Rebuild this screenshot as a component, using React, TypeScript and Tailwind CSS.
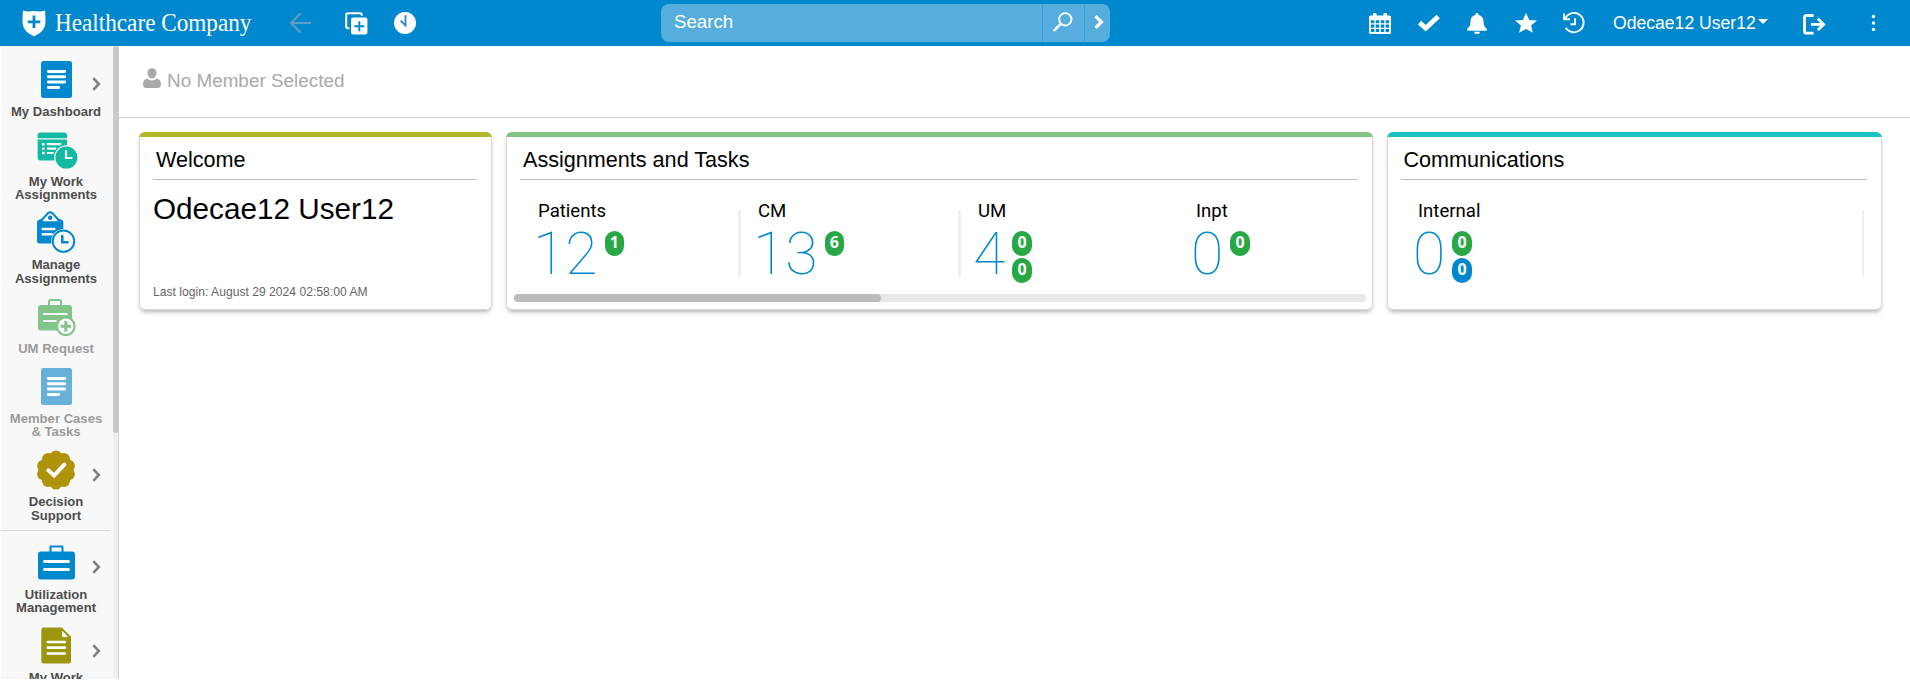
import type { ReactNode } from "react";

function ShieldLogo() {
  return (
    <svg width="24" height="27" viewBox="0 0 24 27">
      <path d="M1 .6C4.500 2 8.500 1.500 12 1c3.500.5 7.500 1 11-.4.3 4 .7 8.400.4 12.400-.6 7-5.400 10.600-11.400 13.200C6 23.600 1.200 20 .6 13 .3 9 .7 4.600 1 .6z" fill="#fff" />
      <path d="M12 5.500v12.600M5.700 11.800h12.600" stroke="#0088ce" strokeWidth="2.800" />
    </svg>
  );
}

function BackArrow() {
  return (
    <svg width="23" height="22" viewBox="0 0 23 22" fill="none" stroke="#5f9fc4" strokeWidth="2.200">
      <path d="M22 11H2M11.500 1.500 2 11l9.500 9.500" />
    </svg>
  );
}

function AddWindow() {
  return (
    <svg width="23" height="23" viewBox="0 0 23 23">
      <path d="M4.500 16.300H2.800a1.600 1.600 0 0 1-1.600-1.600V3a1.800 1.800 0 0 1 1.800-1.800h12.200a1.600 1.600 0 0 1 1.600 1.600v1" fill="none" stroke="#fff" strokeWidth="2" />
      <rect x="6" y="5.600" width="16.400" height="16.800" rx="2" fill="#fff" />
      <path d="M14.300 9.200v10M9.300 14.200h10" stroke="#0088ce" strokeWidth="1.900" />
    </svg>
  );
}

function ClockSolid() {
  return (
    <svg width="22" height="22" viewBox="0 0 22 22">
      <circle cx="11" cy="11" r="11" fill="#fff" />
      <path d="M11.500 3.300v10L6.600 8.600" fill="none" stroke="#2b83c4" strokeWidth="1.800" />
    </svg>
  );
}

function Magnifier() {
  return (
    <svg width="20" height="20" viewBox="0 0 20 20" fill="none" stroke="#fff">
      <circle cx="12.300" cy="7.300" r="6.200" strokeWidth="1.900" />
      <path d="m7.800 11.800-6.300 6.400" strokeWidth="2.600" strokeLinecap="round" />
    </svg>
  );
}

function CalendarIcon() {
  return (
    <svg width="22" height="21" viewBox="0 0 20 21" preserveAspectRatio="none">
      <rect y="2.500" width="20" height="18.500" rx="1.600" fill="#fff" />
      <rect x="3.600" width="3.200" height="5" rx="1.200" fill="#fff" />
      <rect x="13.200" width="3.200" height="5" rx="1.200" fill="#fff" />
      <path d="M1.700 7.300h3.200v3H1.700zM6.100 7.300h3.200v3H6.100zM10.700 7.300h3.200v3h-3.200zM15.100 7.300h3.200v3h-3.200zM1.700 11.500h3.200v3.200H1.700zM6.100 11.500h3.200v3.200H6.100zM10.700 11.500h3.200v3.200h-3.200zM15.100 11.500h3.200v3.200h-3.200zM1.700 15.900h3.200v3.200H1.700zM6.100 15.900h3.200v3.200H6.100zM10.700 15.900h3.200v3.200h-3.200zM15.100 15.900h3.200v3.200h-3.200z" fill="#0088ce" />
    </svg>
  );
}

function CheckIcon() {
  return (
    <svg width="22" height="18" viewBox="0 0 22 18" fill="none" stroke="#fff" strokeWidth="4.800">
      <path d="m1.500 8.600 6.200 5.700L20.200 2.400" />
    </svg>
  );
}

function BellIcon() {
  return (
    <svg width="20" height="21" viewBox="0 0 19 21" preserveAspectRatio="none" fill="#fff">
      <path d="M9.500 0c.9 0 1.500.6 1.500 1.500v.4c3 .7 4.700 3 4.700 6 0 4.300 1 5.800 2.600 7.300.4.400.7.900.7 1.400 0 .8-.5 1.200-1.200 1.200H1.200C.5 17.800 0 17.400 0 16.600c0-.5.300-1 .7-1.400 1.600-1.500 2.600-3 2.600-7.300 0-3 1.700-5.300 4.700-6v-.4C8 .6 8.600 0 9.500 0zM6.800 18.700h5.400a2.700 2.300 0 0 1-5.400 0z" />
    </svg>
  );
}

function StarIcon() {
  return (
    <svg width="22" height="20" viewBox="0 0 20 20" preserveAspectRatio="none" fill="#fff">
      <path d="m10 0 2.900 6.900 7.100.6-5.400 4.900 1.700 7.400-6.300-3.900-6.300 3.900 1.700-7.400L0 7.500l7.100-.6z" />
    </svg>
  );
}

function HistoryIcon() {
  return (
    <svg width="22" height="22" viewBox="0 0 22 22" fill="none" stroke="#fff" strokeWidth="1.900">
      <path d="M2 6.800A9.700 9.700 0 1 1 2.700 15.800" />
      <path d="M1 1.500V7.200H7" />
      <path d="M12 6.200v6H7.500" />
    </svg>
  );
}

function SignOutIcon() {
  return (
    <svg width="23" height="21" viewBox="0 0 23 21" fill="none" stroke="#fff">
      <path d="M10.600 1.500H3.200A1.700 1.700 0 0 0 1.500 3.200v14.300a1.700 1.700 0 0 0 1.700 1.700h7.400" strokeWidth="2.800" />
      <path d="M8 10.400h12.500" strokeWidth="2.800" />
      <path d="m14.800 4.800 5.800 5.600-5.800 5.600" strokeWidth="2.800" />
    </svg>
  );
}

function Chevron() {
  return (
    <svg width="9" height="14" viewBox="0 0 9 14" fill="none" stroke="#808080" strokeWidth="2.600">
      <path d="m1.300 1.200 5.500 5.800-5.500 5.800" />
    </svg>
  );
}

function PageIcon({ fill }: { fill: string }) {
  return (
    <svg width="31" height="37" viewBox="0 0 31 37">
      <rect width="31" height="37" rx="2.500" fill={fill} />
      <path d="M7.300 10.500h16.400M7.300 15.800h16.400M7.300 21h16.400M7.300 26.500h10.400" stroke="#fff" strokeWidth="2.900" strokeLinecap="round" />
    </svg>
  );
}

function WorkIcon() {
  return (
    <svg className="mt-[2px] ml-[3px] shrink-0" width="41" height="37" viewBox="0 0 41 37">
      <path d="M.6 6.200V3A2.500 2.500 0 0 1 3 .5h24.500A2.500 2.500 0 0 1 30 3v3.200z" fill="#13b9a3" />
      <path d="M.6 7.400H30v21H3a2.500 2.500 0 0 1-2.400-2.500z" fill="#13b9a3" />
      <path d="M5 12.200h2.600M5 16.600h2.600M5 21h2.600" stroke="#f8f8f8" strokeWidth="2.400" />
      <path d="M10.800 12.200h12.400M10.800 16.600h7.400M10.800 21h5" stroke="#f8f8f8" strokeWidth="2.200" strokeLinecap="round" />
      <circle cx="29.400" cy="25.600" r="12.300" fill="#f8f8f8" />
      <circle cx="29.400" cy="25.600" r="11" fill="#13b9a3" />
      <path d="M29 19v7h5.500" fill="none" stroke="#f8f8f8" strokeWidth="2.200" strokeLinecap="round" />
    </svg>
  );
}

function ManageIcon() {
  return (
    <svg width="39" height="43" viewBox="0 0 39 43">
      <path d="M2.500 8.500 10 6.500h7L24 8.500a2.500 2.500 0 0 1 2.300 2.500v21.500H3A2.800 2.800 0 0 1 0 29.700V11.500a3 3 0 0 1 2.500-3z" fill="#0088ce" />
      <path d="M5.200 10.200V8.500l6-6.500a2.800 2.800 0 0 1 4 0l6 6.500v1.700" fill="#f8f8f8" stroke="#0088ce" strokeWidth="2" strokeLinejoin="round" />
      <circle cx="13.200" cy="6.700" r="2.200" fill="#0088ce" />
      <path d="M5.800 18h11.500M5.800 23.200h9" stroke="#f8f8f8" strokeWidth="2.500" strokeLinecap="round" />
      <circle cx="26.500" cy="30.200" r="12.200" fill="#f8f8f8" />
      <circle cx="26.500" cy="30.200" r="10.700" fill="#f8f8f8" stroke="#0088ce" strokeWidth="1.900" />
      <path d="M25.300 25v6.200h5.300" fill="none" stroke="#0088ce" strokeWidth="2.500" strokeLinecap="round" />
    </svg>
  );
}

function RequestIcon() {
  return (
    <svg className="mt-[2px] ml-px" width="39" height="37" viewBox="0 0 39 37">
      <path d="M12 6.500V2.700A1.700 1.700 0 0 1 13.700 1h8.600A1.700 1.700 0 0 1 24 2.700v3.800" fill="none" stroke="#82c58b" strokeWidth="2" />
      <rect x="1" y="6" width="34" height="25.500" rx="2.600" fill="#82c58b" />
      <path d="M6.800 15h23M6.800 22h12" stroke="#f8f8f8" strokeWidth="2" strokeLinecap="round" />
      <circle cx="28.800" cy="27.200" r="9.300" fill="#f8f8f8" stroke="#82c58b" strokeWidth="1.200" />
      <circle cx="28.800" cy="27.200" r="8.600" fill="#f8f8f8" stroke="#82c58b" strokeWidth="1.700" />
      <path d="M28.800 22v10.400M23.600 27.200H34" stroke="#82c58b" strokeWidth="3" />
    </svg>
  );
}

const SEAL_LOBES = [0, 1, 2, 3, 4, 5, 6, 7, 8, 9].map((i) => {
  const angle = (i * 36 - 90) * (Math.PI / 180);
  return { cx: 20 + 13.8 * Math.cos(angle), cy: 20 + 13.8 * Math.sin(angle) };
});

function SealIcon() {
  return (
    <svg width="40" height="40" viewBox="0 0 40 40" fill="#ae930b">
      <circle cx="20" cy="20" r="17.600" />
      {SEAL_LOBES.map((lobe, i) => (
        <circle key={i} cx={lobe.cx} cy={lobe.cy} r="5.800" />
      ))}
      <path d="m12.300 20.300 5.800 5.200 10.200-10.800" fill="none" stroke="#fff" strokeWidth="4" strokeLinecap="round" />
    </svg>
  );
}

function BriefcaseIcon() {
  return (
    <svg width="37" height="35" viewBox="0 0 37 35">
      <path d="M12.500 7.500V1.500h12v6" fill="none" stroke="#0088ce" strokeWidth="2" strokeLinejoin="round" />
      <rect y="6.500" width="37" height="28" rx="3" fill="#0088ce" />
      <path d="M6.500 16.500h24M6.500 24.500h24" stroke="#fff" strokeWidth="3" strokeLinecap="round" />
    </svg>
  );
}

function NoteIcon() {
  return (
    <svg width="30" height="37" viewBox="0 0 30 37">
      <path d="M2.800.5h18L30 9.800V34a2.500 2.500 0 0 1-2.500 2.500H2.800A2.500 2.500 0 0 1 .3 34V3A2.500 2.500 0 0 1 2.800.5z" fill="#9a960f" />
      <path d="M21.600 4.400v5.300h4.600z" fill="#f8f8f8" stroke="#f8f8f8" />
      <path d="M6.800 15h17M6.800 20.700h17M6.800 26.500h17" stroke="#fff" strokeWidth="2.700" strokeLinecap="round" />
    </svg>
  );
}

type NavItemProps = { icon: ReactNode; lines: string[]; chevron?: boolean; muted?: boolean };

function NavItem({ icon, lines, chevron, muted }: NavItemProps) {
  return (
    <div className="shrink-0">
      <div className="grid h-[56.500px] grid-cols-[35px_42px_35px] items-center pt-[6px]">
        <span />
        <span className="flex justify-center">{icon}</span>
        {chevron && (
          <span className="pt-[10px] pl-[15px]">
            <Chevron />
          </span>
        )}
      </div>
      <div className={`text-center text-[13.100px] leading-[13.500px] font-bold whitespace-nowrap ${muted ? "text-[#9b9b9b]" : "text-[#4d4d4d]"}`}>
        {lines.map((line) => (
          <div key={line}>{line}</div>
        ))}
      </div>
    </div>
  );
}

function Sidebar() {
  return (
    <aside className="flex h-[633px] w-[119px] shrink-0 overflow-hidden border-r border-[#cfcfcf]">
      <nav className="ml-px flex w-[112px] shrink-0 flex-col overflow-hidden bg-[#f8f8f8] pt-[2px]">
        <div className="-ml-px w-[112px]">
          <NavItem icon={<PageIcon fill="#0088ce" />} lines={["My Dashboard"]} chevron />
          <NavItem icon={<WorkIcon />} lines={["My Work", "Assignments"]} />
          <NavItem icon={<ManageIcon />} lines={["Manage", "Assignments"]} />
          <NavItem icon={<RequestIcon />} lines={["UM Request"]} muted />
          <NavItem icon={<PageIcon fill="#66b0d9" />} lines={["Member Cases", "& Tasks"]} muted />
          <NavItem icon={<SealIcon />} lines={["Decision", "Support"]} chevron />
          <div className="mt-[8px] h-px w-[111px] bg-[#d9d9d9]" />
          <NavItem icon={<BriefcaseIcon />} lines={["Utilization", "Management"]} chevron />
          <NavItem icon={<NoteIcon />} lines={["My Work"]} chevron />
        </div>
      </nav>
      <div className="flex-1 bg-[#efefef]">
        <div className="h-[387px] rounded-[3px] bg-[#c9c9c9]" />
      </div>
    </aside>
  );
}

function Header() {
  return (
    <header className="flex h-[46px] items-center bg-[#0088ce] text-white">
      <div className="flex w-[289px] shrink-0 items-center pl-[22px]">
        <ShieldLogo />
        <span className="ml-[9px] origin-left scale-x-[0.892] font-['Liberation_Serif',serif] text-[26px] leading-[46px] whitespace-nowrap">
          Healthcare Company
        </span>
      </div>
      <div className="flex w-[372px] shrink-0 items-center">
        <BackArrow />
        <span className="ml-[33px]"><AddWindow /></span>
        <span className="ml-[26px]"><ClockSolid /></span>
      </div>
      <div className="flex h-[38px] w-[449px] shrink-0 overflow-hidden rounded-[8px] bg-[#55aedd]">
        <div className="flex-1 pl-[13px] text-[18.700px] leading-[36px]">Search</div>
        <div className="flex w-[42px] justify-center border-l border-[#369fd6] pt-[8px] pr-[2px]">
          <Magnifier />
        </div>
        <div className="flex w-[26px] border-l border-[#369fd6] pt-[11px] pl-[9px]">
          <svg width="10" height="14" viewBox="0 0 10 14" fill="none" stroke="#fff" strokeWidth="3.200">
            <path d="M1.500 1.200 7.400 7l-5.900 5.800" />
          </svg>
        </div>
      </div>
      <div className="ml-[259px] flex shrink-0 items-center">
        <span className="w-[49px]"><CalendarIcon /></span>
        <span className="w-[49px]"><CheckIcon /></span>
        <span className="w-[48px]"><BellIcon /></span>
        <span className="w-[48px]"><StarIcon /></span>
        <span className="w-[50px]"><HistoryIcon /></span>
        <span className="w-[145px] text-[17.600px] leading-[46px] whitespace-nowrap">Odecae12 User12</span>
        <span className="w-[45px] pb-[3px]">
          <svg width="10" height="5" viewBox="0 0 10 5" fill="#fff"><path d="M0 0h10L5 5z" /></svg>
        </span>
        <span className="w-[68px] pt-[2px]"><SignOutIcon /></span>
        <svg width="5" height="18" viewBox="0 0 5 18" fill="#fff">
          <circle cx="2.500" cy="2.500" r="1.700" />
          <circle cx="2.500" cy="9" r="1.700" />
          <circle cx="2.500" cy="15.500" r="1.700" />
        </svg>
      </div>
    </header>
  );
}

function Card({ title, width, bar, children }: { title: string; width: string; bar: string; children: ReactNode }) {
  return (
    <section className={`flex h-[178px] shrink-0 flex-col overflow-hidden rounded-[6px] bg-white shadow-[0_0_0_1px_#dadada_inset,0_3px_4px_-1px_rgba(0,0,0,0.3)] ${width}`}>
      <div className={`h-[5px] shrink-0 ${bar}`} />
      <h2 className="mr-[15px] ml-[14px] h-[43px] shrink-0 border-b border-[#bdbdbd] pl-[3px] text-[21.600px] leading-[45px] text-black">{title}</h2>
      {children}
    </section>
  );
}

function Badge({ value, tone }: { value: number; tone: string }) {
  return (
    <span className={`flex h-[25px] w-[19.500px] justify-center rounded-[10px] font-['Open_Sans',sans-serif] text-[16px] leading-[23px] font-bold text-white ${tone}`}>
      {value}
    </span>
  );
}

type StatProps = { label: string; value: number; width: string; badges: string[]; counts: number[]; divider?: string };

function Stat({ label, value, width, badges, counts, divider }: StatProps) {
  return (
    <div className={`flex shrink-0 justify-between font-['Roboto',sans-serif] ${width}`}>
      <div>
        <div className="h-[31px] pl-[5px] text-[18.600px] leading-[23px] text-black">{label}</div>
        <div className="flex">
          <span className="-mt-[2px] text-[59px] leading-[50px] font-thin text-[#0088ce]">{value}</span>
          <div className="ml-[7px] flex flex-col gap-[2px]">
            {counts.map((count, i) => (
              <Badge key={i} value={count} tone={badges[i]} />
            ))}
          </div>
        </div>
      </div>
      {divider && <div className={`mt-[10px] h-[67px] rounded-[1px] bg-[#efefef] ${divider}`} />}
    </div>
  );
}

const GREEN = "bg-[#28a745]";
const BLUE = "bg-[#0088ce]";

export default function App() {
  return (
    <div className="h-[693px] w-[1910px] overflow-hidden bg-white font-['Liberation_Sans',Arial,sans-serif]">
      <Header />
      <div className="flex">
        <Sidebar />
        <main className="min-w-0 flex-1">
          <div className="flex h-[72px] border-b border-[#cfcfcf] pl-[24px] text-[#a9a9a9]">
            <svg className="mt-[22px]" width="18" height="20" viewBox="0 0 18 20" fill="#a9a9a9">
              <ellipse cx="9" cy="5.200" rx="4.500" ry="5.200" />
              <path d="M4.300 10.500C5.500 11.800 7 12.400 9 12.400s3.500-.6 4.700-1.900C16.500 11 18 13 18 16.500c0 2.500-1.200 3.500-3.500 3.500h-11C1.200 20 0 19 0 16.500 0 13 1.500 11 4.300 10.500z" />
            </svg>
            <span className="ml-[6px] text-[18.900px] leading-[69px]">No Member Selected</span>
          </div>
          <div className="flex pt-[14px] pl-[20px]">
            <Card title="Welcome" width="w-[353px]" bar="bg-[#b5b62e]">
              <div className="flex flex-1 flex-col justify-between pr-[14px] pb-[9px] pl-[14px]">
                <div className="pt-[10px] text-[29.700px] leading-[38px] text-black">Odecae12 User12</div>
                <div className="text-[12.150px] leading-[18px] text-[#666]">Last login: August 29 2024 02:58:00 AM</div>
              </div>
            </Card>
            <span className="w-[14px]" />
            <Card title="Assignments and Tasks" width="w-[867px]" bar="bg-[#80c383]">
              <div className="flex h-[114px] shrink-0 pt-[20px] pl-[27px]">
                <Stat label="Patients" value={12} width="w-[208px]" badges={[GREEN]} counts={[1]} divider="w-[3px]" />
                <span className="w-[12px]" />
                <Stat label="CM" value={13} width="w-[208px]" badges={[GREEN]} counts={[6]} divider="w-[3px]" />
                <span className="w-[12px]" />
                <Stat label="UM" value={4} width="w-[218px]" badges={[GREEN, GREEN]} counts={[0, 0]} />
                <Stat label="Inpt" value={0} width="w-[160px]" badges={[GREEN]} counts={[0]} />
              </div>
              <div className="mr-[7px] ml-[8px] h-[8px] shrink-0 rounded-[4px] bg-[#e8e8e8]">
                <div className="h-[8px] w-[367px] rounded-[4px] bg-[#bcbcbc]" />
              </div>
            </Card>
            <span className="w-[13.500px]" />
            <Card title="Communications" width="w-[495.500px]" bar="bg-[#1cc2c3]">
              <div className="flex pt-[20px] pl-[26.500px]">
                <Stat label="Internal" value={0} width="w-[451px]" badges={[GREEN, BLUE]} counts={[0, 0]} divider="w-[2px]" />
              </div>
            </Card>
          </div>
        </main>
      </div>
    </div>
  );
}
